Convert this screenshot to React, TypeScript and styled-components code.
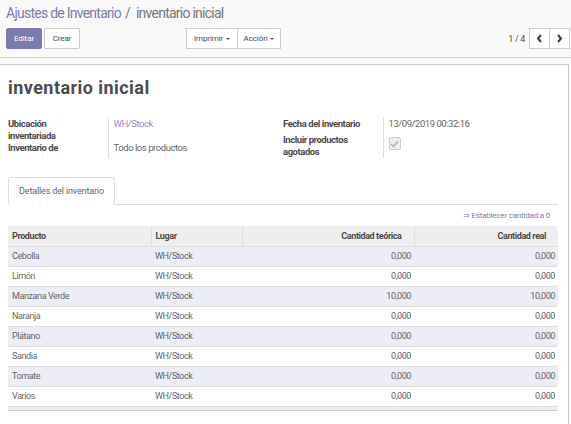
import React from "react";
import styled, { createGlobalStyle } from "styled-components";

const Global = createGlobalStyle`
  html, body { margin: 0; padding: 0; }
  body {
    font-family: Roboto, "Noto Sans", sans-serif;
    color: #4c4c4c;
    background: #f9f9f9;
    width: 571px;
    height: 424px;
    overflow: hidden;
  }
  * { box-sizing: border-box; }
`;

const purple = "#7c7bad";

const Page = styled.div`
  display: flex;
  flex-direction: column;
  height: 424px;
`;

const ControlPanel = styled.div`
  background: #f9f9f9;
  border-bottom: 1px solid #d6d6d6;
  padding: 4px 1px 8px 6px;
`;

const Breadcrumb = styled.div`
  font-size: 14px;
  line-height: 18px;
  letter-spacing: -0.75px;
  display: flex;
  align-items: center;
  gap: 4px;
`;

const Crumb = styled.span<{ $active?: boolean }>`
  color: ${(p) => (p.$active ? "#777" : purple)};
`;

const Sep = styled.span`
  color: #777;
  margin-right: 2px;
`;

const ButtonsRow = styled.div`
  display: flex;
  margin-top: 6px;
  height: 21px;
`;

const LeftHalf = styled.div`
  width: 50%;
  display: flex;
  justify-content: space-between;
  padding-right: 7px;
`;

const RightHalf = styled.div`
  width: 50%;
  display: flex;
  justify-content: flex-end;
  align-items: center;
`;

const BtnGroup = styled.div<{ $gap?: number }>`
  display: flex;
  gap: ${(p) => p.$gap ?? 0}px;
`;

const Btn = styled.button<{ $primary?: boolean; $w: number; $joined?: boolean }>`
  width: ${(p) => p.$w}px;
  height: 21px;
  font-family: Roboto, sans-serif;
  font-size: 8px;
  letter-spacing: -0.1px;
  padding: 0;
  border: 1px solid ${(p) => (p.$primary ? purple : "#ccc")};
  background: ${(p) => (p.$primary ? purple : "#fff")};
  color: ${(p) => (p.$primary ? "#fff" : "#4c4c4c")};
  border-radius: ${(p) => (p.$joined ? 0 : "2px")};
  display: flex;
  align-items: center;
  justify-content: center;
  gap: 3px;
  & + & {
    margin-left: ${(p) => (p.$joined ? "-1px" : "0")};
  }
`;

const Caret = styled.span`
  width: 0;
  height: 0;
  border-left: 2px solid transparent;
  border-right: 2px solid transparent;
  border-top: 2px solid #4c4c4c;
  margin-top: 1px;
`;

const PagerText = styled.span`
  font-size: 9px;
  letter-spacing: -0.3px;
  color: #4c4c4c;
  margin-right: 4px;
`;

const PagerBtn = styled.button`
  width: 21px;
  height: 21px;
  padding: 0;
  border: 1px solid #ccc;
  background: #fff;
  display: flex;
  align-items: center;
  justify-content: center;
  & + & {
    margin-left: -1px;
  }
`;

const Body = styled.div`
  flex: 1;
  padding-top: 6px;
  overflow: hidden;
`;

const Sheet = styled.div`
  width: 569px;
  height: 100%;
  background: #fff;
  border: 1px solid #ccc;
  border-left: none;
  border-bottom: none;
  padding: 11px 9px 0 8px;
`;

const Title = styled.h1`
  margin: 0;
  font-size: 18px;
  line-height: 24px;
  letter-spacing: 0.45px;
  font-weight: bold;
  color: #4c4c4c;
`;

const Groups = styled.div`
  display: grid;
  grid-template-columns: 275px 275px;
  margin-top: 18px;
`;

const FieldTable = styled.table`
  border-collapse: collapse;
  font-size: 9.5px;
  letter-spacing: -0.45px;
  line-height: 12px;
`;

const Label = styled.td<{ $w: number }>`
  width: ${(p) => p.$w}px;
  height: 16px;
  padding: 0;
  vertical-align: top;
  font-weight: bold;
  color: #4c4c4c;
  border-right: 1px solid #ddd;
`;

const Value = styled.td<{ $link?: boolean }>`
  padding: 0 0 0 5px;
  vertical-align: top;
  color: ${(p) => (p.$link ? "#8f8ec4" : "#666")};
`;

const Checkbox = styled.span`
  display: inline-flex;
  align-items: center;
  justify-content: center;
  width: 12px;
  height: 13px;
  margin-top: 3px;
  border: 1px solid #ccc;
  border-radius: 2px;
  background: #eee;
`;

const TabNav = styled.div`
  display: flex;
  margin-top: 19px;
  border-bottom: 1px solid #ddd;
  width: 550px;
`;

const Tab = styled.div`
  width: 107px;
  height: 28px;
  margin-bottom: -1px;
  border: 1px solid #ddd;
  border-bottom-color: #fff;
  border-radius: 3px 3px 0 0;
  background: #fff;
  font-size: 9px;
  letter-spacing: -0.15px;
  color: #666;
  display: flex;
  align-items: center;
  justify-content: center;
`;

const LinkRow = styled.div`
  width: 550px;
  display: flex;
  justify-content: flex-end;
  padding: 6px 8px 0 0;
  font-size: 8px;
  letter-spacing: -0.2px;
  line-height: 10px;
  color: ${purple};
`;

const Grid = styled.table`
  width: 550px;
  margin-top: 5px;
  border-collapse: collapse;
  font-size: 9px;
  letter-spacing: -0.4px;
  table-layout: fixed;
`;

const Th = styled.th<{ $right?: boolean }>`
  height: 20px;
  padding: 0 ${(p) => (p.$right ? "12px" : "4px")} 0 4px;
  background: #eee;
  text-align: ${(p) => (p.$right ? "right" : "left")};
  font-weight: bold;
  color: #4c4c4c;
  & + & {
    border-left: 1px solid #ddd;
  }
`;

const Tr = styled.tr<{ $odd?: boolean }>`
  background: ${(p) => (p.$odd ? "#ededf5" : "#fff")};
  border-top: 1px solid #ddd;
`;

const Td = styled.td<{ $right?: boolean }>`
  height: 20px;
  padding: 0 3px 0 4px;
  text-align: ${(p) => (p.$right ? "right" : "left")};
  color: #666;
`;

const FootRow = styled.tr`
  border-top: 1px solid #ddd;
  border-bottom: 1px solid #ccc;
  background: #eee;
`;

const FootCell = styled.td`
  height: 4px;
  padding: 0;
`;

const rows = [
  ["Cebolla", "0,000", "0,000"],
  ["Limón", "0,000", "0,000"],
  ["Manzana Verde", "10,000", "10,000"],
  ["Naranja", "0,000", "0,000"],
  ["Plátano", "0,000", "0,000"],
  ["Sandia", "0,000", "0,000"],
  ["Tomate", "0,000", "0,000"],
  ["Varios", "0,000", "0,000"],
];

const Chevron = ({ dir }: { dir: "l" | "r" }) => (
  <svg width="7" height="9" viewBox="0 0 7 9">
    <path
      d={dir === "l" ? "M5 1 L2 4.5 L5 8" : "M2 1 L5 4.5 L2 8"}
      fill="none"
      stroke="#3a3a5a"
      strokeWidth="2"
    />
  </svg>
);

export default function App() {
  return (
    <>
      <Global />
      <Page>
        <ControlPanel>
          <Breadcrumb>
            <Crumb>Ajustes de Inventario</Crumb>
            <Sep>/</Sep>
            <Crumb $active>inventario inicial</Crumb>
          </Breadcrumb>
          <ButtonsRow>
            <LeftHalf>
              <BtnGroup $gap={3}>
                <Btn $primary $w={36}>Editar</Btn>
                <Btn $w={36}>Crear</Btn>
              </BtnGroup>
              <BtnGroup>
                <Btn $w={52} $joined>
                  Imprimir <Caret />
                </Btn>
                <Btn $w={44} $joined>
                  Acción <Caret />
                </Btn>
              </BtnGroup>
            </LeftHalf>
            <RightHalf>
              <PagerText>1 / 4</PagerText>
              <PagerBtn>
                <Chevron dir="l" />
              </PagerBtn>
              <PagerBtn>
                <Chevron dir="r" />
              </PagerBtn>
            </RightHalf>
          </ButtonsRow>
        </ControlPanel>
        <Body>
          <Sheet>
            <Title>inventario inicial</Title>
            <Groups>
              <FieldTable>
                <tbody>
                  <tr>
                    <Label $w={100}>
                      Ubicación
                      <br />
                      inventariada
                    </Label>
                    <Value $link>WH/Stock</Value>
                  </tr>
                  <tr>
                    <Label $w={100}>Inventario de</Label>
                    <Value>Todo los productos</Value>
                  </tr>
                </tbody>
              </FieldTable>
              <FieldTable>
                <tbody>
                  <tr>
                    <Label $w={100}>Fecha del inventario</Label>
                    <Value>13/09/2019 00:32:16</Value>
                  </tr>
                  <tr>
                    <Label $w={100}>
                      Incluir productos
                      <br />
                      agotados
                    </Label>
                    <Value>
                      <Checkbox>
                        <svg width="9" height="8" viewBox="0 0 9 8">
                          <path d="M1 4 L3.5 6.5 L8 1.5" fill="none" stroke="#aaa" strokeWidth="1.4" />
                        </svg>
                      </Checkbox>
                    </Value>
                  </tr>
                </tbody>
              </FieldTable>
            </Groups>
            <TabNav>
              <Tab>Detalles del inventario</Tab>
            </TabNav>
            <LinkRow>⇒ Establecer cantidad a 0</LinkRow>
            <Grid>
              <colgroup>
                <col style={{ width: 143 }} />
                <col style={{ width: 91 }} />
                <col style={{ width: 172 }} />
                <col style={{ width: 144 }} />
              </colgroup>
              <thead>
                <tr>
                  <Th>Producto</Th>
                  <Th>Lugar</Th>
                  <Th $right>Cantidad teórica</Th>
                  <Th $right>Cantidad real</Th>
                </tr>
              </thead>
              <tbody>
                {rows.map((r, i) => (
                  <Tr key={r[0]} $odd={i % 2 === 0}>
                    <Td>{r[0]}</Td>
                    <Td>WH/Stock</Td>
                    <Td $right>{r[1]}</Td>
                    <Td $right>{r[2]}</Td>
                  </Tr>
                ))}
                <FootRow>
                  <FootCell />
                  <FootCell />
                  <FootCell />
                  <FootCell />
                </FootRow>
              </tbody>
            </Grid>
          </Sheet>
        </Body>
      </Page>
    </>
  );
}
